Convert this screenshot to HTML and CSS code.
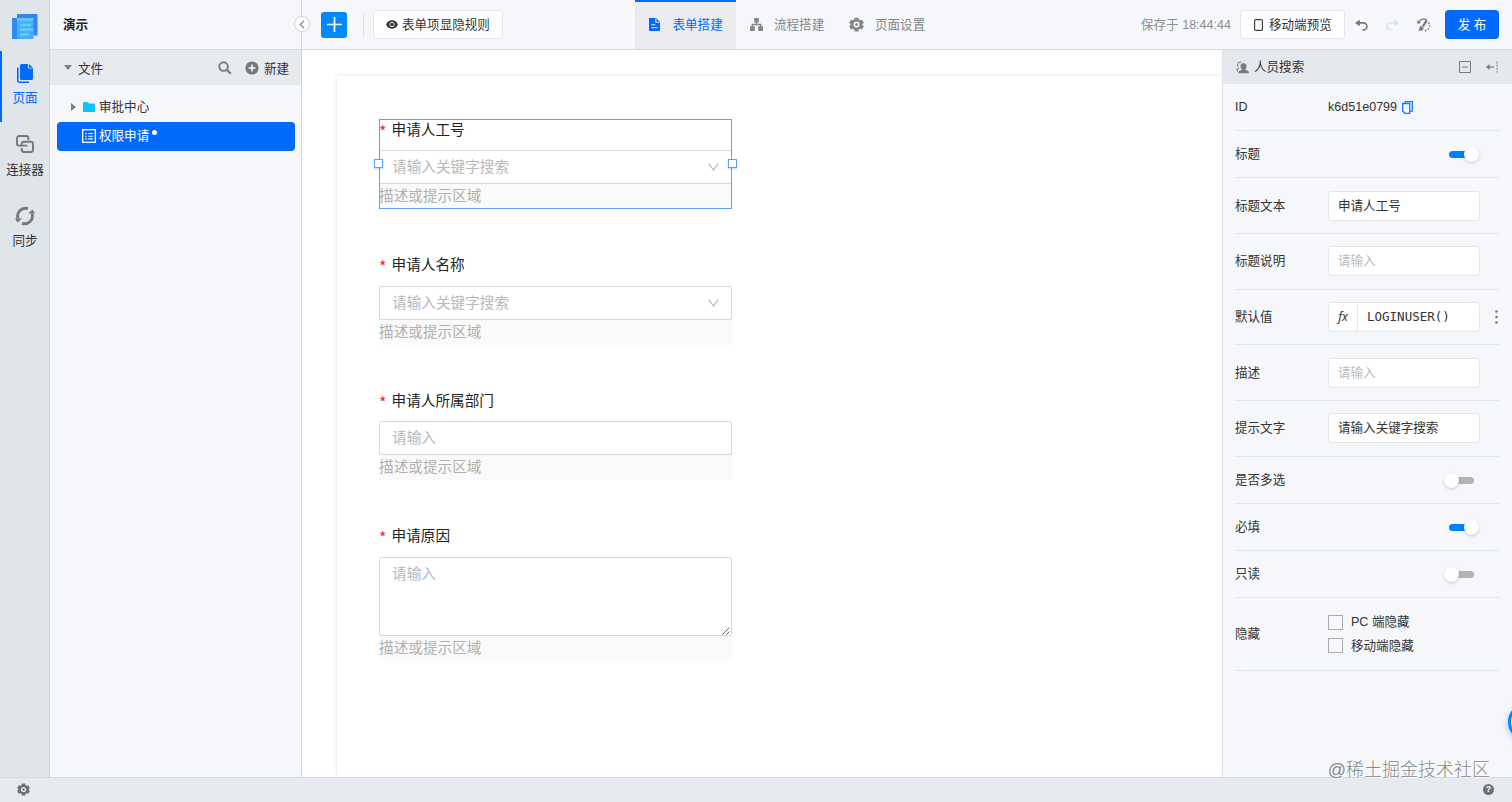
FILE: index.html
```
<!DOCTYPE html>
<html lang="zh-CN">
  <head>
    <meta charset="UTF-8" />
    <title>演示</title>
    <meta name="viewport" content="width=device-width, initial-scale=1.0" />
    <link rel="stylesheet" href="styles.css">
  </head>
  <body>
    <svg class="defs">
      <symbol id="gear" viewBox="0 0 24 24">
        <path fill="currentColor" fill-rule="evenodd" d="M9 1h6l.8 3 2 1.100 3-.9 2.900 5-2.200 2.200v1.200l2.200 2.200-2.900 5-3-.9-2 1.100L15 23H9l-.8-3-2-1.100-3 .9-2.900-5 2.200-2.200v-1.200L.3 9.200l2.900-5 3 .9L8.200 4zM12 7.200a4.800 4.800 0 1 0 0 9.600 4.800 4.800 0 0 0 0-9.600zM12 9.800a2.200 2.200 0 1 1 0 4.400 2.200 2.200 0 0 1 0-4.400z" />
      </symbol>
    </svg>
    <div class="app">
      <div class="main">
        <nav class="rail">
          <div class="logo">
            <svg width="26" height="27" viewBox="0 0 26 27">
              <path d="M5 1h20.500v21.500H5z" fill="#2f86f3" />
              <path d="M0 5h5v21H0z" fill="#3089f5" />
              <path d="M5 5h16.500v21H5z" fill="#48adff" />
              <path d="M5 6.500h16M8 12h11M8 16.500h13M8 21.500h9" stroke="#66ccff" stroke-width="2.500" />
            </svg>
          </div>
          <a class="rail-item active">
            <svg width="16" height="19" viewBox="0 0 16 19">
              <path d="M4.500 0H11v3.500a1 1 0 0 0 1 1h4V14.500a1.500 1.500 0 0 1-1.500 1.500h-10A1.500 1.500 0 0 1 3 14.500v-13A1.500 1.500 0 0 1 4.500 0zM12 0l4 3.700h-4z" fill="currentColor" />
              <path d="M.8 3.500V16.500a1.700 1.700 0 0 0 1.700 1.700H12" fill="none" stroke="currentColor" stroke-width="1.600" />
            </svg>
            <span>页面</span>
          </a>
          <a class="rail-item">
            <svg width="18" height="18" viewBox="0 0 18 18" fill="none" stroke="currentColor" stroke-width="1.900">
              <path d="M12.300 5V3.200a2.200 2.200 0 0 0-2.200-2.200H3.200A2.200 2.200 0 0 0 1 3.200v5.200a2.200 2.200 0 0 0 2.200 2.200h8.300" />
              <path d="M5.700 13v1.800A2.200 2.200 0 0 0 7.900 17h6.900a2.200 2.200 0 0 0 2.200-2.200V9a2.200 2.200 0 0 0-2.200-2.200H7.900a2.200 2.200 0 0 0-2.200 2.200v1.500" />
            </svg>
            <span>连接器</span>
          </a>
          <a class="rail-item">
            <svg width="20" height="20" viewBox="0 0 20 20">
              <path d="M3 12.500A7.800 7.800 0 0 1 13 2.700M17 7.500A7.800 7.800 0 0 1 7 17.300" fill="none" stroke="currentColor" stroke-width="2.900" />
              <path d="M0 12.500h7L2.500 16.500zM20 7.500h-7L17.500 3.500z" fill="currentColor" />
            </svg>
            <span>同步</span>
          </a>
        </nav>

        <aside class="sidebar">
          <div class="app-name">演示</div>
          <span class="collapse">
            <svg width="6" height="9" viewBox="0 0 6 9"><path d="M5 .8 1.300 4.500 5 8.200" fill="none" stroke="#999" stroke-width="1.600" /></svg>
          </span>
          <div class="files-head">
            <i class="caret-down"></i>
            <span class="files-title">文件</span>
            <svg class="search" width="14" height="14" viewBox="0 0 14 14" fill="none" stroke="#777b80">
              <circle cx="5.600" cy="5.600" r="4.300" stroke-width="1.900" />
              <path d="m8.800 8.800 4 4" stroke-width="2.200" />
            </svg>
            <svg width="14" height="14" viewBox="0 0 14 14">
              <circle cx="7" cy="7" r="6.600" fill="#75797e" />
              <path d="M3.600 7h6.800M7 3.600v6.800" stroke="#fff" stroke-width="1.500" />
            </svg>
            <span class="new">新建</span>
          </div>
          <div class="tree">
            <div class="node">
              <i class="caret-right"></i>
              <svg width="12" height="10" viewBox="0 0 12 10"><path d="M0 .8C0 .3.300 0 .8 0h3.700L6 1.500h5.200c.5 0 .8.300.8.800v6.900c0 .5-.3.800-.8.800H.8C.3 10 0 9.700 0 9.200z" fill="#0cc4f8" /></svg>
              <span>审批中心</span>
            </div>
            <div class="node selected">
              <svg width="14" height="14" viewBox="0 0 14 14" fill="none" stroke="#fff">
                <rect x=".7" y=".7" width="12.600" height="12.600" stroke-width="1.300" />
                <path d="M3.200 4.500h1.600M6.300 4.500h4.500M3.200 7.200h1.600M6.300 7.200h4.500M3.200 9.900h1.600M6.300 9.900h4.500" stroke-width="1.100" />
              </svg>
              <span>权限申请</span>
              <i class="dot"></i>
            </div>
          </div>
        </aside>

        <section class="workspace">
          <header class="topbar">
            <button class="add">
              <svg width="15" height="15" viewBox="0 0 15 15"><path d="M0 7.500h15M7.500 0v15" stroke="#fff" stroke-width="1.700" /></svg>
            </button>
            <i class="divider"></i>
            <button class="btn rules">
              <svg width="12" height="9" viewBox="0 0 12 9">
                <path d="M6 .3C9 .3 11 2.200 11.800 4.500 11 6.800 9 8.700 6 8.700S1 6.800.2 4.500C1 2.200 3 .3 6 .3z" fill="#333" />
                <circle cx="6" cy="4.500" r="2.200" fill="none" stroke="#fff" stroke-width=".9" />
              </svg>
              表单项显隐规则
            </button>
            <div class="tabs">
              <a class="tab active">
                <svg width="11" height="13" viewBox="0 0 11 13">
                  <path d="M1 0h6l4 4v8a1 1 0 0 1-1 1H1a1 1 0 0 1-1-1V1a1 1 0 0 1 1-1z" fill="currentColor" />
                  <path d="M6.800.5v3.700h3.700M2.300 6.800h4M2.300 9.800h6.400" fill="none" stroke="#e8eaee" stroke-width="1.100" />
                </svg>
                <span>表单搭建</span>
              </a>
              <a class="tab">
                <svg width="13" height="13" viewBox="0 0 13 13">
                  <path d="M4.200 0h4.600v4.400H4.200zM0 8.300h4.800V13H0zM8.200 8.300H13V13H8.200z" fill="currentColor" />
                  <path d="M6.500 4v2.500M2.300 9V6.500h8.400V9" fill="none" stroke="currentColor" stroke-width="1.400" />
                </svg>
                <span>流程搭建</span>
              </a>
              <a class="tab">
                <svg width="15" height="15"><use href="#gear" /></svg>
                <span>页面设置</span>
              </a>
            </div>
            <span class="saved">保存于 18:44:44</span>
            <button class="btn preview">
              <svg width="9" height="12" viewBox="0 0 9 12"><rect x=".6" y=".6" width="7.800" height="10.800" rx="1" fill="none" stroke="#444" stroke-width="1.200" /></svg>
              移动端预览
            </button>
            <svg class="undo" width="13" height="12" viewBox="0 0 13 12">
              <path d="M2 3.900h6.400a3.500 3.500 0 0 1 0 7H7.500" fill="none" stroke="#777" stroke-width="1.600" />
              <path d="M0 3.900 4.800.5v6.800z" fill="#777" />
            </svg>
            <svg class="redo" width="13" height="12" viewBox="0 0 13 12">
              <path d="M11 3.900H4.600a3.500 3.500 0 0 0 0 7H5.500" fill="none" stroke="#dcdfe3" stroke-width="1.400" />
              <path d="M13 3.900 8.200.5v6.800z" fill="#dcdfe3" />
            </svg>
            <svg class="clear" width="14" height="14" viewBox="0 0 14 14">
              <path d="M1.800 3.800C3.500.8 7.500.300 10 2.300" fill="none" stroke="#777" stroke-width="1.300" />
              <path d="M0 2.200 4.200 4.800.5 6z" fill="#777" />
              <path d="M9.800 2.300 5.800 8.500" stroke="#777" stroke-width="2.300" />
              <path d="M3.500 7.800 6.800 10 4.800 12.700l-3.300-.2z" fill="#777" />
              <path d="M11.500 4.500C14 8 12 12 7.500 12.800" fill="none" stroke="#777" stroke-width="1.400" stroke-dasharray="1.500 1.600" />
            </svg>
            <button class="publish">发 布</button>
          </header>

          <div class="content">
            <main class="canvas">
              <div class="sheet">
                <div class="field selected">
                  <label><b>*</b>申请人工号</label>
                  <div class="control">请输入关键字搜索
                    <svg width="11" height="8" viewBox="0 0 11 8"><path d="m.7.700 4.800 6.300L10.300.7" fill="none" stroke="#b5b5b5" stroke-width="1.100" /></svg>
                  </div>
                  <p class="hint">描述或提示区域</p>
                  <i class="handle left"></i>
                  <i class="handle right"></i>
                </div>
                <div class="field">
                  <label><b>*</b>申请人名称</label>
                  <div class="control">请输入关键字搜索
                    <svg width="11" height="8" viewBox="0 0 11 8"><path d="m.7.700 4.800 6.300L10.300.7" fill="none" stroke="#b5b5b5" stroke-width="1.100" /></svg>
                  </div>
                  <p class="hint">描述或提示区域</p>
                </div>
                <div class="field">
                  <label><b>*</b>申请人所属部门</label>
                  <div class="control">请输入</div>
                  <p class="hint">描述或提示区域</p>
                </div>
                <div class="field">
                  <label><b>*</b>申请原因</label>
                  <div class="control area">请输入
                    <svg width="8" height="8" viewBox="0 0 8 8"><path d="M.5 7.500l7-7M4.500 7.500l3-3" stroke="#666" stroke-width="1" /></svg>
                  </div>
                  <p class="hint">描述或提示区域</p>
                </div>
              </div>
            </main>

            <aside class="props">
              <div class="props-head">
                <svg width="13" height="13" viewBox="0 0 13 13">
                  <path d="M1.500 5.500C1.200 2.500 3 .7 5.200 1M2.800 6.500.6 9.200M.6 9.200l1.400 1" fill="none" stroke="#777b80" stroke-width="1.100" />
                  <path d="M7.500 2.200c2 0 3.100 1.300 3.100 3 0 1.200-.5 2.200-1.100 2.800v.8l2.600 1.200c.5.300.7.700.7 1.300v1H2.500v-1c0-.6.200-1 .7-1.300l2.500-1.200V8C5 7.400 4.500 6.400 4.500 5.200c0-1.700 1-3 3-3z" fill="#777b80" />
                </svg>
                <span class="props-title">人员搜索</span>
                <svg width="12" height="12" viewBox="0 0 12 12"><path d="M.5.500h11v11H.5zM3 6h6" fill="none" stroke="#777b80" /></svg>
                <svg class="dock" width="12" height="12" viewBox="0 0 12 12">
                  <path d="M1 6h7" stroke="#777b80" stroke-width="1.300" />
                  <path d="M0 6l3.500-3v6z" fill="#777b80" />
                  <path d="M11 .5v11" stroke="#777b80" stroke-dasharray="2 1.200" />
                </svg>
              </div>
              <div class="rows">
                <div class="row">
                  <span class="name">ID</span>
                  <span class="id-value">k6d51e0799</span>
                  <svg width="11" height="13" viewBox="0 0 11 13" fill="none" stroke="#1677ff" stroke-width="1.300">
                    <path d="M3 .7h7.300v9.600" />
                    <path d="M3 .7v1.700M.7 2.500h7v9.800H3L.7 10z" /><path d="M8 10.300h2.300" />
                  </svg>
                </div>
                <div class="row"><span class="name">标题</span><i class="switch on"></i></div>
                <div class="row tall"><span class="name">标题文本</span><div class="input">申请人工号</div></div>
                <div class="row tall"><span class="name">标题说明</span><div class="input empty">请输入</div></div>
                <div class="row tall">
                  <span class="name">默认值</span>
                  <div class="input formula"><em>fx</em><code>LOGINUSER()</code></div>
                  <svg class="more" width="3" height="14" viewBox="0 0 3 14" fill="#777"><circle cx="1.500" cy="1.500" r="1.300" /><circle cx="1.500" cy="7" r="1.300" /><circle cx="1.500" cy="12.500" r="1.300" /></svg>
                </div>
                <div class="row tall"><span class="name">描述</span><div class="input empty">请输入</div></div>
                <div class="row tall"><span class="name">提示文字</span><div class="input">请输入关键字搜索</div></div>
                <div class="row"><span class="name">是否多选</span><i class="switch"></i></div>
                <div class="row"><span class="name">必填</span><i class="switch on"></i></div>
                <div class="row"><span class="name">只读</span><i class="switch"></i></div>
                <div class="row checks">
                  <span class="name">隐藏</span>
                  <div>
                    <div class="check"><i></i>PC 端隐藏</div>
                    <div class="check"><i></i>移动端隐藏</div>
                  </div>
                </div>
              </div>
            </aside>
          </div>
        </section>
      </div>

      <footer class="statusbar">
        <svg width="13" height="13"><use href="#gear" /></svg>
        <span class="help">?</span>
      </footer>

      <i class="float-btn"></i>
      <span class="watermark">@稀土掘金技术社区</span>
    </div>
  </body>
</html>
```

FILE: styles.css
```
* {
  box-sizing: border-box;
}

body {
  margin: 0;
  font-family: 'Liberation Sans', 'Noto Sans CJK SC', sans-serif;
  font-size: 12.55px;
  color: #333;
}

svg {
  display: block;
  flex-shrink: 0;
}

button {
  font: inherit;
}

.defs {
  display: none;
}

.app {
  position: relative;
  display: flex;
  flex-direction: column;
  height: 100vh;
  overflow: hidden;
}

.main {
  display: flex;
  flex: 1;
  min-height: 0;
}

/* left rail */
.rail {
  width: 50px;
  background: #dfe5e8;
  border-right: 1px solid #cfd6d9;
}

.logo {
  height: 51px;
  padding: 13px 0 0 12px;
}

.rail-item {
  display: flex;
  flex-direction: column;
  align-items: center;
  justify-content: space-between;
  height: 71.4px;
  padding: 12.5px 2px 14px 0;
  line-height: 20px;
  color: #75797c;
  border-left: 2px solid transparent;
  margin-right: -1px;
}

.rail-item span {
  color: #333;
  white-space: nowrap;
}

.rail-item.active,
.rail-item.active span {
  color: #006aff;
}

.rail-item.active {
  border-left-color: #006aff;
}

/* page tree */
.sidebar {
  position: relative;
  width: 252px;
  background: #f5f7fa;
  border-right: 1px solid #d3d7dc;
}

.app-name {
  height: 50px;
  padding-left: 13px;
  line-height: 50px;
  font-weight: bold;
  color: #222;
  border-bottom: 1px solid #d5d8dd;
}

.collapse {
  position: absolute;
  z-index: 2;
  top: 16px;
  right: -9px;
  display: flex;
  align-items: center;
  justify-content: center;
  width: 16px;
  height: 16px;
  background: #fff;
  border: 1px solid #cfd2d6;
  border-radius: 50%;
}

.files-head {
  display: flex;
  align-items: center;
  height: 35px;
  padding: 0 12px 0 14px;
  background: #e7eaee;
}

.caret-down {
  border: 4px solid transparent;
  border-top: 5px solid #7b7f84;
  border-bottom: 0;
}

.files-title {
  flex: 1;
  margin-left: 6px;
}

.search {
  margin-right: 13px;
}

.new {
  margin-left: 5px;
}

.tree {
  padding: 7px 6px 7px 7px;
}

.node {
  display: flex;
  align-items: center;
  height: 29.5px;
  padding-left: 14px;
  line-height: 18px;
}

.caret-right {
  margin-right: 7px;
  border: 4px solid transparent;
  border-left: 5px solid #7b7f84;
  border-right: 0;
}

.node span {
  margin-left: 4px;
}

.node.selected {
  padding-left: 25px;
  color: #fff;
  background: #006aff;
  border-radius: 4px;
}

.node.selected span {
  margin-left: 3px;
}

.dot {
  width: 5px;
  height: 5px;
  margin: -8px 0 0 3px;
  background: #fff;
  border-radius: 50%;
}

/* top bar */
.workspace {
  display: flex;
  flex: 1;
  flex-direction: column;
  min-width: 0;
}

.topbar {
  display: flex;
  align-items: center;
  height: 50px;
  padding: 0 13px 0 19px;
  line-height: 16px;
  background: #f5f7fa;
  border-bottom: 1px solid #d5d8dd;
}

.add {
  display: flex;
  align-items: center;
  justify-content: center;
  width: 26px;
  height: 26px;
  padding: 0;
  background: #0089ff;
  border: 0;
  border-radius: 3px;
}

.divider {
  width: 1px;
  height: 22px;
  margin: 0 9px 0 16px;
  background: #dadde2;
}

.btn {
  display: flex;
  align-items: center;
  height: 29px;
  padding: 0 12px;
  color: #333;
  background: #fff;
  border: 1px solid #e3e5e9;
  border-radius: 3px;
  white-space: nowrap;
}

.rules {
  gap: 4px;
  width: 130px;
}

.tabs {
  display: flex;
  align-self: stretch;
  margin-left: 132px;
}

.tab {
  display: flex;
  align-items: center;
  width: 101px;
  padding-left: 14px;
  color: #858789;
}

.tab svg {
  margin-right: 11px;
}

.tab:last-child {
  padding-left: 12px;
}

.tab.active {
  color: #006aff;
  background: #e9ebef;
  border-top: 2px solid #006aff;
  padding-bottom: 2px;
}

.tab.active svg {
  margin-right: 12.5px;
}

.saved {
  margin-left: auto;
  color: #8b8d90;
}

.preview {
  gap: 6px;
  width: 105px;
  margin-left: 9px;
  padding-left: 13px;
}

.undo {
  margin-left: 10px;
}

.redo {
  margin-left: 18px;
}

.clear {
  margin-left: 18px;
}

.publish {
  width: 54px;
  height: 29px;
  margin-left: 14px;
  padding: 0;
  color: #fff;
  background: #006aff;
  border: 0;
  border-radius: 4px;
}

/* form canvas */
.content {
  display: flex;
  flex: 1;
  min-height: 0;
}

.canvas {
  flex: 1;
  padding: 26px 0 0 35px;
  overflow: hidden;
}

.sheet {
  height: 100%;
  padding: 42.8px 0 0 42px;
  background: #fff;
  box-shadow: 0 0 4px rgba(0, 0, 0, 0.14);
  font-size: 14.65px;
}

.field {
  position: relative;
  width: 353px;
  margin-bottom: 45.2px;
}

.field label {
  display: flex;
  height: 31.3px;
  line-height: 22px;
  color: #222;
}

.field b {
  width: 12.5px;
  padding-top: 1px;
  font-family: 'Noto Sans CJK SC', sans-serif;
  font-size: 16px;
  font-weight: normal;
  color: #f0243c;
}

.control {
  display: flex;
  align-items: center;
  justify-content: space-between;
  height: 34px;
  padding: 0 12px;
  line-height: 32px;
  color: #b8b8b8;
  border: 1px solid #d6d7d9;
  border-radius: 2px;
}

.area {
  align-items: flex-start;
  height: 79px;
}

.area svg {
  align-self: flex-end;
  margin: 0 -11px 0 0;
}

.hint {
  height: 25px;
  margin: 0;
  line-height: 25px;
  color: #b0b0b0;
  background: #fafafa;
}

.field.selected::after {
  content: '';
  position: absolute;
  inset: 0;
  border: 1px solid #5ca3f5;
}

.handle {
  position: absolute;
  z-index: 1;
  top: 40px;
  width: 9px;
  height: 9px;
  background: #fff;
  border: 1px solid #5ca3f5;
  box-shadow: 0 1px 2px rgba(0, 106, 255, 0.3);
}

.handle.left {
  left: -5px;
}

.handle.right {
  right: -5px;
}

/* property panel */
.props {
  width: 290px;
  background: #f5f7fa;
  border-left: 1px solid #dfe2e6;
}

.props-head {
  display: flex;
  align-items: center;
  height: 34px;
  padding: 0 14px 0 13px;
  line-height: 16px;
  background: #e5e9ed;
}

.props-title {
  flex: 1;
  margin-left: 5px;
}

.dock {
  margin-left: 15px;
}

.rows {
  margin: 0 12px;
}

.row {
  display: flex;
  align-items: center;
  height: 47.1px;
  line-height: 18px;
  border-bottom: 1px solid #e4e7eb;
}

.row.tall {
  height: 55.7px;
}

.row.checks {
  height: 73px;
}

.name {
  width: 93px;
}

.id-value {
  margin-right: 5px;
}

.input {
  width: 152px;
  height: 30px;
  padding: 0 9px;
  line-height: 29px;
  background: #fff;
  border: 1px solid #e3e5e9;
  border-radius: 3px;
}

.input.empty {
  color: #bbb;
}

.formula {
  display: flex;
  padding: 0;
  line-height: 28px;
}

.formula em {
  width: 29px;
  font-family: 'Noto Sans', sans-serif;
  font-size: 12px;
  text-align: center;
  border-right: 1px solid #e3e5e9;
}

.formula code {
  padding-left: 9px;
  font-family: 'DejaVu Sans Mono', monospace;
  font-size: 12.5px;
}

.more {
  margin-left: 15px;
}

.switch {
  position: relative;
  width: 26px;
  height: 7px;
  margin: 1px 26px 0 auto;
  background: #b2b3b5;
  border-radius: 4px;
}

.switch::after {
  content: '';
  position: absolute;
  top: -4px;
  left: -4px;
  width: 15px;
  height: 15px;
  background: #fff;
  border-radius: 50%;
  box-shadow: 0 1px 3px rgba(0, 0, 0, 0.2);
}

.switch.on {
  margin-right: 25px;
  background: #0080ff;
}

.switch.on::after {
  left: 15px;
}

.check {
  display: flex;
  align-items: center;
  height: 23.6px;
  line-height: 16px;
}

.check i {
  width: 15px;
  height: 15px;
  margin-right: 8px;
  border: 1px solid #a9abad;
}

/* bottom bar */
.statusbar {
  display: flex;
  align-items: center;
  justify-content: space-between;
  height: 25px;
  padding: 0 18px 1px 17px;
  color: #6d7175;
  background: #e7eaee;
  border-top: 1px solid #d5d9dc;
}

.help {
  width: 11px;
  height: 11px;
  line-height: 11px;
  font-size: 9px;
  font-weight: bold;
  text-align: center;
  color: #fff;
  background: #6d7175;
  border-radius: 50%;
}

.float-btn {
  position: absolute;
  top: 703px;
  right: -34px;
  width: 38px;
  height: 38px;
  background: #e3f7ff;
  border: 3px solid #0089ff;
  border-radius: 50%;
  box-shadow: 0 2px 6px rgba(0, 80, 200, 0.3);
}

.watermark {
  position: absolute;
  top: 756px;
  right: 22px;
  line-height: 28px;
  font-size: 18px;
  font-weight: 300;
  color: #85888c;
  text-shadow: 1px 1px 0 #fff;
}
```
